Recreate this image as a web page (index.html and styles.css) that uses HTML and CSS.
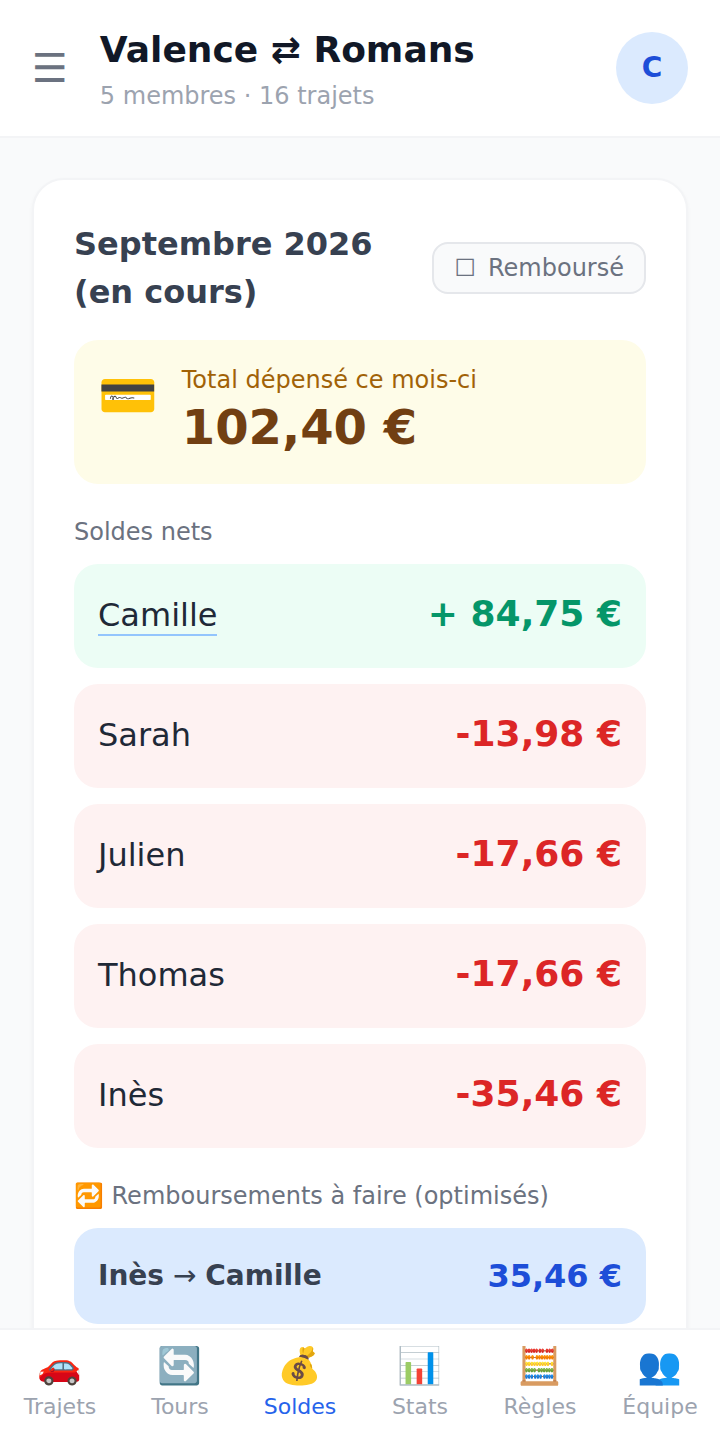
FILE: index.html
```html
<!DOCTYPE html>
<html lang="fr">
<head>
<meta charset="utf-8">
<meta name="viewport" content="width=device-width, initial-scale=1">
<title>Valence ⇄ Romans</title>
<link rel="stylesheet" href="styles.css">
</head>
<body>
<div class="app">
  <header class="topbar">
    <button class="menu-button" type="button" aria-label="Menu">☰</button>
    <div class="group">
      <h1 class="group-name">Valence ⇄ Romans</h1>
      <p class="group-meta">5 membres · 16 trajets</p>
    </div>
    <button class="avatar" type="button" aria-label="Profil de Camille">C</button>
  </header>

  <main class="content">
    <section class="card">
      <div class="card-head">
        <h2 class="month">Septembre 2026 (en cours)</h2>
        <button class="settle-button" type="button"><span>☐</span><span>Remboursé</span></button>
      </div>

      <div class="total">
        <span class="total-icon" aria-hidden="true">💳</span>
        <div>
          <p class="total-label">Total dépensé ce mois-ci</p>
          <p class="total-amount">102,40 €</p>
        </div>
      </div>

      <h3 class="section-title">Soldes nets</h3>
      <ul class="balances">
        <li class="balance positive"><span class="name"><a class="self" href="#camille">Camille</a></span><span class="amount">+ 84,75 €</span></li>
        <li class="balance negative"><span class="name">Sarah</span><span class="amount">-13,98 €</span></li>
        <li class="balance negative"><span class="name">Julien</span><span class="amount">-17,66 €</span></li>
        <li class="balance negative"><span class="name">Thomas</span><span class="amount">-17,66 €</span></li>
        <li class="balance negative"><span class="name">Inès</span><span class="amount">-35,46 €</span></li>
      </ul>

      <h3 class="section-title">🔁 Remboursements à faire (optimisés)</h3>
      <div class="transfer">
        <span class="transfer-names"><b>Inès</b> → <b>Camille</b></span>
        <span class="transfer-amount">35,46 €</span>
      </div>
    </section>
  </main>

  <nav class="tabs" aria-label="Navigation principale">
    <a class="tab" href="#trajets"><span class="tab-icon" aria-hidden="true">🚗</span>Trajets</a>
    <a class="tab" href="#tours"><span class="tab-icon" aria-hidden="true">🔄</span>Tours</a>
    <a class="tab active" href="#soldes" aria-current="page"><span class="tab-icon" aria-hidden="true">💰</span>Soldes</a>
    <a class="tab" href="#stats"><span class="tab-icon" aria-hidden="true">📊</span>Stats</a>
    <a class="tab" href="#regles"><span class="tab-icon" aria-hidden="true">🧮</span>Règles</a>
    <a class="tab" href="#equipe"><span class="tab-icon" aria-hidden="true">👥</span>Équipe</a>
  </nav>
</div>
</body>
</html>
```
FILE: styles.css
```css
*, *::before, *::after { box-sizing: border-box; }

body {
  margin: 0;
  background: #f9fafb;
  color: #1f2937;
  font-family: "DejaVu Sans", "Noto Color Emoji", sans-serif;
  font-size: 32px;
  line-height: 48px;
}

h1, h2, h3, p, ul { margin: 0; padding: 0; }
ul { list-style: none; }
a { color: inherit; text-decoration: none; }
button { font: inherit; border: 0; padding: 0; background: none; cursor: pointer; }

.app {
  display: flex;
  flex-direction: column;
  height: 100vh;
}

.topbar {
  display: flex;
  align-items: center;
  gap: 32px;
  padding: 24px 32px;
  background: #fff;
  border-bottom: 2px solid #f3f4f6;
}
.menu-button { color: #6b7280; font-size: 40px; line-height: 56px; }
.group { flex: 1; min-width: 0; }
.group-name { color: #111827; font-size: 36px; line-height: 52px; margin-bottom: 4px; }
.group-meta { color: #9ca3af; font-size: 24px; line-height: 32px; }
.avatar {
  width: 72px;
  height: 72px;
  border-radius: 50%;
  background: #dbeafe;
  color: #1d4ed8;
  font-size: 28px;
  font-weight: 700;
  line-height: 40px;
}

.content {
  flex: 1;
  min-height: 0;
  overflow-y: auto;
  scrollbar-width: none;
  padding: 40px 32px;
}
.card {
  padding: 40px;
  background: #fff;
  border: 2px solid #f3f4f6;
  border-radius: 32px;
  box-shadow: 0 2px 4px rgba(0, 0, 0, 0.04);
}
.card-head {
  display: flex;
  align-items: center;
  justify-content: space-between;
  gap: 16px;
  margin-bottom: 24px;
}
.month { color: #374151; font-size: 32px; line-height: 48px; }
.settle-button {
  display: flex;
  flex: none;
  gap: 12px;
  padding: 8px 20px;
  border: 2px solid #e5e7eb;
  border-radius: 16px;
  background: #f9fafb;
  color: #6b7280;
  font-size: 24px;
  line-height: 32px;
}

.total {
  display: flex;
  align-items: flex-start;
  gap: 24px;
  padding: 24px;
  border-radius: 24px;
  background: #fefce8;
}
.total-icon { font-size: 48px; line-height: 62px; }
.total-label { color: #a16207; font-size: 24px; line-height: 32px; }
.total-amount { color: #713f12; font-size: 48px; font-weight: 700; line-height: 62px; padding-bottom: 2px; }

.section-title {
  margin: 32px 0 16px;
  color: #6b7280;
  font-size: 24px;
  font-weight: 400;
  line-height: 32px;
}

.balances { display: flex; flex-direction: column; gap: 16px; }
.balance {
  display: flex;
  align-items: flex-start;
  justify-content: space-between;
  padding: 24px;
  border-radius: 24px;
}
.positive { background: #ecfdf5; }
.negative { background: #fef2f2; }
.name { line-height: 54px; }
.self { border-bottom: 2px solid #93c5fd; }
.amount { font-size: 36px; font-weight: 700; line-height: 52px; padding-bottom: 4px; }
.positive .amount { color: #059669; }
.negative .amount { color: #dc2626; }

.transfer {
  display: flex;
  align-items: center;
  justify-content: space-between;
  padding: 24px;
  border-radius: 24px;
  background: #dbeafe;
}
.transfer-names { color: #374151; font-size: 28px; line-height: 40px; }
.transfer-amount { color: #1d4ed8; font-weight: 700; }

.tabs {
  display: grid;
  grid-template-columns: repeat(6, 1fr);
  background: #fff;
  border-top: 2px solid #f3f4f6;
}
.tab {
  display: flex;
  flex-direction: column;
  align-items: center;
  gap: 4px;
  padding: 16px 0;
  color: #9ca3af;
  font-size: 22px;
  line-height: 34px;
}
.tab-icon { font-size: 36px; line-height: 40px; }
.active { color: #2563eb; }
```
